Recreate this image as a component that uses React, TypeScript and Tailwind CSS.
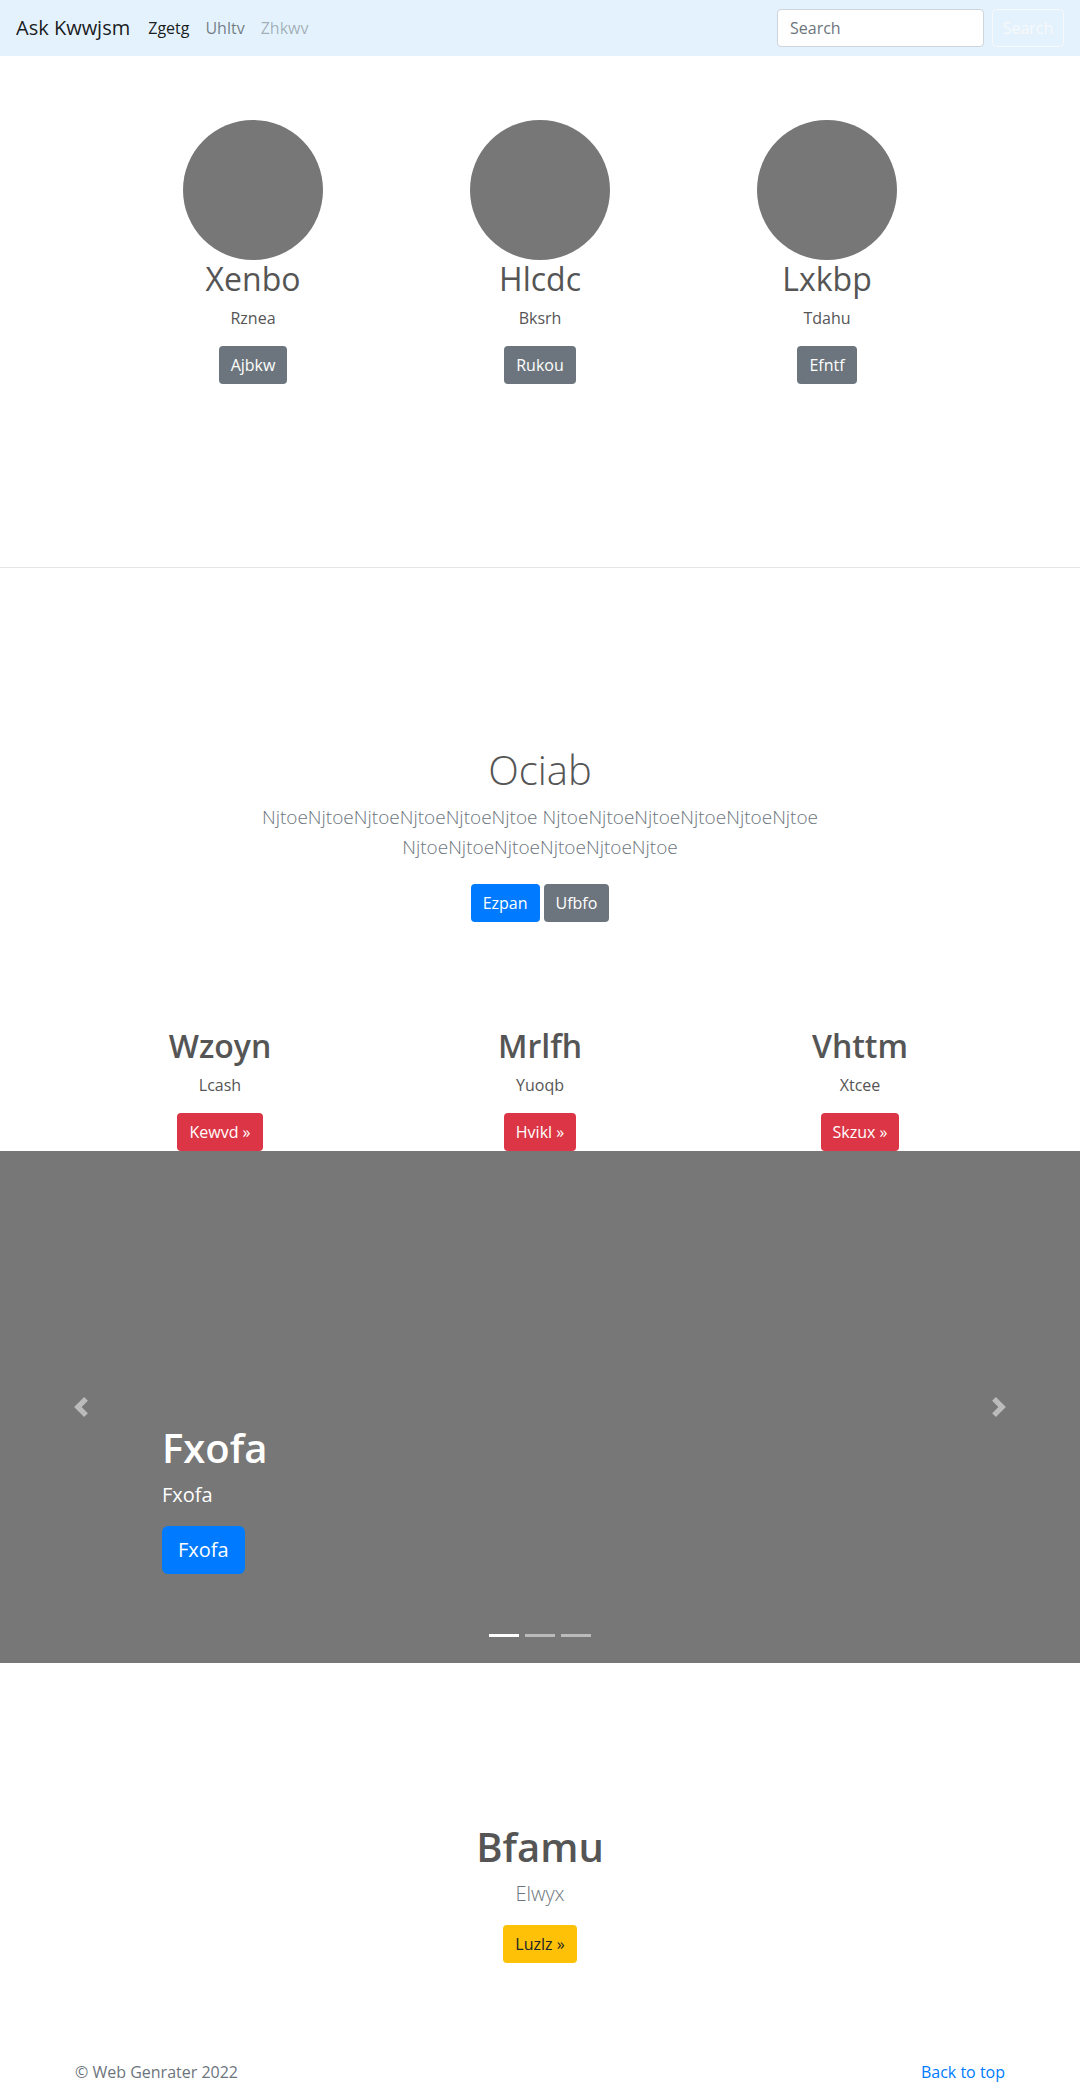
const font = "font-['Open_Sans','Noto_Sans',sans-serif]";

const team = [
  { name: 'Xenbo', role: 'Rznea', action: 'Ajbkw' },
  { name: 'Hlcdc', role: 'Bksrh', action: 'Rukou' },
  { name: 'Lxkbp', role: 'Tdahu', action: 'Efntf' },
];

const features = [
  { title: 'Wzoyn', text: 'Lcash', action: 'Kewvd »' },
  { title: 'Mrlfh', text: 'Yuoqb', action: 'Hvikl »' },
  { title: 'Vhttm', text: 'Xtcee', action: 'Skzux »' },
];

function Navbar() {
  return (
    <nav className="flex h-14 items-center bg-[#e3f2fd] px-4">
      <a className="mr-[10px] text-[20px] leading-[30px] text-black/90">Ask Kwwjsm</a>
      <ul className="flex items-center text-base">
        <li className="px-2 text-black/90">Zgetg</li>
        <li className="px-2 text-black/50">Uhltv</li>
        <li className="px-2 text-black/30">Zhkwv</li>
      </ul>
      <form className="ml-auto flex items-center">
        <input
          placeholder="Search"
          className="mr-2 h-[38px] w-[207px] rounded border border-[#ced4da] bg-white px-3 text-base text-[#495057] placeholder:text-[#6c757d] outline-none"
        />
        <button className="h-[38px] w-[72px] rounded border border-[#f8f9fa] text-base text-[#f8f9fa]">Search</button>
      </form>
    </nav>
  );
}

function CarouselArrow({ side }: { side: 'left' | 'right' }) {
  return (
    <svg viewBox="0 0 8 8" className="h-5 w-5 fill-white">
      {side === 'left' ? (
        <path d="M5.25 0l-4 4 4 4 1.5-1.5L4.25 4l2.5-2.5L5.25 0z" />
      ) : (
        <path d="M2.75 0l-1.5 1.5L3.75 4l-2.5 2.5L2.75 8l4-4-4-4z" />
      )}
    </svg>
  );
}

export default function App() {
  return (
    <div className={`${font} min-h-[2084px] bg-white text-base text-[#555]`}>
      <Navbar />

      {/* team row */}
      <section className="mx-auto grid w-[861px] grid-cols-3 pt-16 pb-[183px] text-center">
        {team.map((m) => (
          <div key={m.name} className="flex flex-col items-center">
            <svg width="140" height="140" className="block">
              <circle cx="70" cy="70" r="70" fill="#777" />
            </svg>
            <h2 className="mb-2 text-[32px] leading-[38px]">{m.name}</h2>
            <p className="mb-4 leading-6">{m.role}</p>
            <button className="h-[38px] rounded bg-[#6c757d] px-3 text-white">{m.action}</button>
          </div>
        ))}
      </section>

      <hr className="border-t border-black/10" />

      {/* jumbotron */}
      <section className="pt-[178px] text-center">
        <div className="mx-auto w-[640px] px-[15px]">
          <h1 className="mb-2 text-[40px] font-light leading-[48px] text-[#555]">Ociab</h1>
          <p className="mb-4 text-[19px] font-light leading-[30px] text-[#6c757d]">
            NjtoeNjtoeNjtoeNjtoeNjtoeNjtoe NjtoeNjtoeNjtoeNjtoeNjtoeNjtoe
            <br />
            NjtoeNjtoeNjtoeNjtoeNjtoeNjtoe
          </p>
          <div className="flex justify-center gap-1 pt-[6px]">
            <button className="h-[38px] rounded bg-[#007bff] px-3 text-white">Ezpan</button>
            <button className="h-[38px] rounded bg-[#6c757d] px-3 text-white">Ufbfo</button>
          </div>
        </div>
      </section>

      {/* features */}
      <section className="mx-auto grid w-[960px] grid-cols-3 pt-[105px] text-center">
        {features.map((f) => (
          <div key={f.title} className="flex flex-col items-center">
            <h2 className="mb-2 text-[32px] font-semibold leading-[38px]">{f.title}</h2>
            <p className="mb-4 leading-6">{f.text}</p>
            <button className="h-[38px] rounded bg-[#dc3545] px-3 text-white">{f.action}</button>
          </div>
        ))}
      </section>

      {/* carousel */}
      <section className="relative h-[512px] bg-[#777]">
        <div className="absolute bottom-[89px] left-[15%] right-[15%] text-white">
          <h1 className="mb-2 text-[40px] font-semibold leading-[48px]">Fxofa</h1>
          <p className="mb-4 text-[20px] leading-[30px]">Fxofa</p>
          <button className="h-12 rounded-md bg-[#007bff] px-4 text-[20px] text-white">Fxofa</button>
        </div>
        <div className="absolute inset-y-0 left-0 flex w-[15%] items-center justify-center opacity-50">
          <CarouselArrow side="left" />
        </div>
        <div className="absolute inset-y-0 right-0 flex w-[15%] items-center justify-center opacity-50">
          <CarouselArrow side="right" />
        </div>
        <ol className="absolute bottom-[26px] left-0 right-0 flex justify-center gap-[6px]">
          <li className="h-[3px] w-[30px] bg-white" />
          <li className="h-[3px] w-[30px] bg-white/50" />
          <li className="h-[3px] w-[30px] bg-white/50" />
        </ol>
      </section>

      {/* call to action */}
      <section className="pt-[160px] text-center">
        <h1 className="mb-2 text-[40px] font-semibold leading-[48px]">Bfamu</h1>
        <p className="mb-4 text-[20px] font-light leading-[30px] text-[#6c757d]">Elwyx</p>
        <button className="h-[38px] rounded bg-[#ffc107] px-3 text-[#212529]">Luzlz »</button>
      </section>

      <footer className="mx-auto flex w-[960px] justify-between px-[15px] pt-[97px] text-[#6c757d]">
        <p className="leading-6">© Web Genrater 2022</p>
        <a className="leading-6 text-[#007bff]">Back to top</a>
      </footer>
    </div>
  );
}
